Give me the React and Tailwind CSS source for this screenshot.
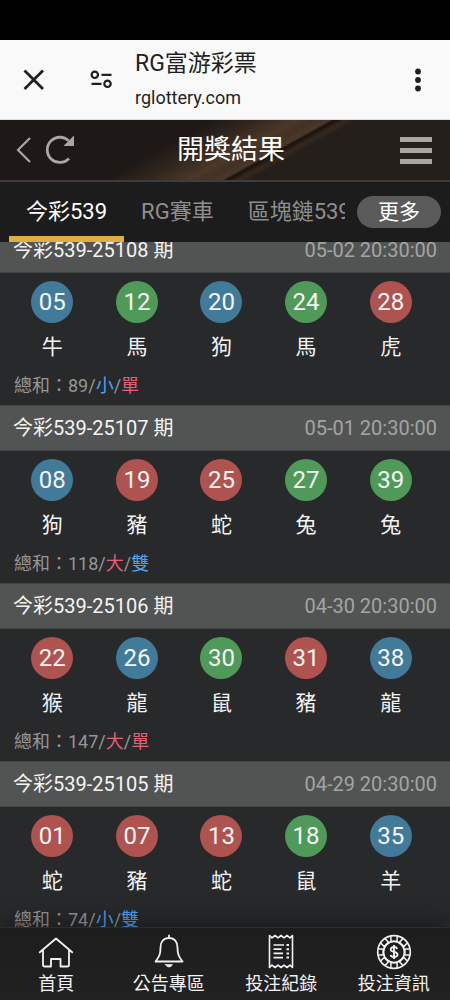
const draws = [
  { id: "25108", date: "05-02 20:30:00", balls: [["05", "b", "牛"], ["12", "g", "馬"], ["20", "b", "狗"], ["24", "g", "馬"], ["28", "r", "虎"]], sum: "89", size: "小", parity: "單" },
  { id: "25107", date: "05-01 20:30:00", balls: [["08", "b", "狗"], ["19", "r", "豬"], ["25", "r", "蛇"], ["27", "g", "兔"], ["39", "g", "兔"]], sum: "118", size: "大", parity: "雙" },
  { id: "25106", date: "04-30 20:30:00", balls: [["22", "r", "猴"], ["26", "b", "龍"], ["30", "g", "鼠"], ["31", "r", "豬"], ["38", "b", "龍"]], sum: "147", size: "大", parity: "單" },
  { id: "25105", date: "04-29 20:30:00", balls: [["01", "r", "蛇"], ["07", "r", "豬"], ["13", "r", "蛇"], ["18", "g", "鼠"], ["35", "b", "羊"]], sum: "74", size: "小", parity: "雙" },
];

const ballColor = { b: "bg-[#427a99]", g: "bg-[#4f9a59]", r: "bg-[#ae5350]" };
const wordColor = { 小: "text-[#4da3ee]", 雙: "text-[#4da3ee]", 大: "text-[#e2607a]", 單: "text-[#e2607a]" };

function BrowserBar() {
  return (
    <div className="flex h-20 shrink-0 items-center border-b border-[#dedede] bg-[#f9f9f9] px-5 text-[#1f1f1f]">
      <button type="button" aria-label="關閉" className="flex size-7 items-center justify-center">
        <svg viewBox="0 0 28 28" className="size-7" fill="none" stroke="currentColor" strokeWidth="2.800">
          <path d="M4.500 4.500 23 23M23 4.500 4.500 23" />
        </svg>
      </button>
      <button type="button" aria-label="網站設定" className="ml-10 flex size-7 items-center justify-center">
        <svg viewBox="0 0 28 28" className="size-7" fill="none" stroke="currentColor" strokeWidth="2.200">
          <circle cx="6.800" cy="8.800" r="3.200" />
          <path d="M13.500 8.800H23.500M3.500 17.800H13.500" />
          <circle cx="19.500" cy="17.800" r="3.200" />
        </svg>
      </button>
      <div className="ml-[19px] flex-1">
        <p className="text-[23px] leading-8">RG富游彩票</p>
        <p className="pt-1 text-lg leading-7">rglottery.com</p>
      </div>
      <button type="button" aria-label="選單" className="flex h-8 w-6 items-center justify-center">
        <svg viewBox="0 0 24 32" className="h-8 w-6" fill="currentColor">
          <circle cx="12" cy="7.500" r="2.900" />
          <circle cx="12" cy="16" r="2.900" />
          <circle cx="12" cy="24.500" r="2.900" />
        </svg>
      </button>
    </div>
  );
}

function PageHeader() {
  return (
    <header className="grid h-[62px] shrink-0 grid-cols-[1fr_auto_1fr] items-center border-b-2 border-[#3d3d3d] bg-[#251f1b] bg-[linear-gradient(151deg,#1e1916_0%,#1e1916_38%,#33271d_46%,#4a3828_53%,#423124_56%,#4a3828_59%,#17120f_60%,#35281e_62%,#251f1b_64%,#251f1b_100%)] pr-[18px] pl-4 text-[#aaa6a3]">
      <div className="flex items-center gap-3">
        <button type="button" aria-label="返回">
          <svg viewBox="0 0 16 28" className="h-7 w-4" fill="none" stroke="currentColor" strokeWidth="2.200">
            <path d="M14 2 2 14 14 26" />
          </svg>
        </button>
        <button type="button" aria-label="重新整理">
          <svg viewBox="0 0 32 32" className="size-8" fill="none" stroke="currentColor" strokeWidth="2.800">
            <path d="M24.600 6.800A12.600 12.600 0 1 0 25 24.500" />
            <path d="M30 1.500v10.500H19.500z" fill="currentColor" stroke="none" />
          </svg>
        </button>
      </div>
      <h1 className="pl-3.5 text-[27px] leading-8 text-white">開獎結果</h1>
      <button type="button" aria-label="主選單" className="flex flex-col gap-1.5 justify-self-end">
        <span className="h-[5px] w-8 bg-[#aaa6a3]" />
        <span className="h-[5px] w-8 bg-[#aaa6a3]" />
        <span className="h-[5px] w-8 bg-[#aaa6a3]" />
      </button>
    </header>
  );
}

function Tabs() {
  return (
    <nav className="flex h-[60px] shrink-0 items-center bg-[#1c1c1c] px-[9px] text-[22px]">
      <div className="flex h-full min-w-0 flex-1 overflow-hidden whitespace-nowrap text-[#8f8f8f]">
        <button type="button" className="shrink-0 border-b-[6px] border-[#e0ad40] px-[17px] pt-1 text-white">今彩539</button>
        <button type="button" className="shrink-0 border-b-[6px] border-transparent px-[17px] pt-1">RG賽車</button>
        <button type="button" className="shrink-0 border-b-[6px] border-transparent px-[17px] pt-1">區塊鏈539</button>
      </div>
      <button type="button" className="ml-3 h-8 w-[84px] rounded-full bg-[#5a5a5a] text-[21px] leading-8 text-white">更多</button>
    </nav>
  );
}

function Draw({ draw }) {
  return (
    <article>
      <div className="flex h-[46px] items-center justify-between border-y border-[#434544] bg-[#525453] px-[13px] text-xl">
        <h2 className="text-[#f4f4f4]">今彩539-{draw.id} 期</h2>
        <time className="text-[#a3a4a4]">{draw.date}</time>
      </div>
      <div className="h-[132px] pt-2">
        <ul className="grid grid-cols-5 pr-[17px] pl-2.5">
          {draw.balls.map(([number, color, animal]) => (
            <li key={number} className="flex flex-col items-center text-[#f4f4f4]">
              <span className={`flex size-[42px] items-center justify-center rounded-full text-2xl ${ballColor[color]}`}>{number}</span>
              <span className="pt-2 text-[21px] leading-8">{animal}</span>
            </li>
          ))}
        </ul>
        <p className="px-3.5 pt-[9px] text-lg leading-7 text-[#969696]">
          總和：{draw.sum}/<span className={wordColor[draw.size]}>{draw.size}</span>/<span className={wordColor[draw.parity]}>{draw.parity}</span>
        </p>
      </div>
    </article>
  );
}

function HomeIcon() {
  return (
    <svg viewBox="0 0 36 36" className="size-9" fill="none" stroke="currentColor" strokeWidth="1.800" strokeLinejoin="round" strokeLinecap="round">
      <path d="M1.800 18.300 18 4.500l16.200 13.800M5 16V31q0 1.500 1.500 1.500H13V25h9.500V32.500h7q1.500 0 1.500-1.500V16" />
    </svg>
  );
}

function BellIcon() {
  return (
    <svg viewBox="0 0 36 36" className="size-9" fill="none" stroke="currentColor" strokeWidth="1.800" strokeLinejoin="round" strokeLinecap="round">
      <path d="M18 1.500v2.500M18 4c-5.500 0-8.500 4-8.500 9.500 0 6.500-1 9-5 14h27c-4-5-5-7.500-5-14C26.500 8 23.500 4 18 4z" />
      <path d="M14.500 30.500h7c-.5 1.500-2 2.500-3.500 2.500s-3-1-3.500-2.500z" fill="currentColor" strokeWidth="0.600" />
    </svg>
  );
}

function ReceiptIcon() {
  return (
    <svg viewBox="0 0 36 36" className="size-9" fill="none" stroke="currentColor" strokeWidth="1.600" strokeLinejoin="round">
      <path d="M6.500 1.500l2.500 2.300 3-2.300 3 2.300 3-2.300 3 2.300 3-2.300 3 2.300 2.500-2.300v32l-2.500-2.300-3 2.300-3-2.300-3 2.300-3-2.300-3 2.300-3-2.300-2.500 2.300z" />
      <path d="M10.500 11H21M10.500 15.200H18.500M10.500 19.400H20M10.500 23.600H20" strokeWidth="1.700" />
      <path d="M23.500 11H26M23.500 15.200H26M23.500 19.400H26M23.500 23.600H26" strokeWidth="2" />
    </svg>
  );
}

function ChipIcon() {
  return (
    <svg viewBox="0 0 36 36" className="size-9" fill="none" stroke="currentColor" strokeWidth="1.700">
      <circle cx="18" cy="18" r="16.300" />
      <circle cx="18" cy="18" r="10.500" />
      {[0, 45, 90, 135, 180, 225, 270, 315].map((angle) => (
        <path key={angle} d="M14.900 2.200V8M21.100 2.200V8M15.500 7.200h5" strokeWidth="1.500" transform={`rotate(${angle} 18 18)`} />
      ))}
      <path d="M21.300 14.800c-.6-1.300-1.800-1.800-3.300-1.800-2 0-3.300 1-3.300 2.400 0 3.400 6.800 1.700 6.800 5.100 0 1.500-1.500 2.500-3.500 2.500-1.700 0-3-.6-3.500-2M18 11v14" strokeWidth="1.900" />
    </svg>
  );
}

const links = [
  { label: "首頁", Icon: HomeIcon },
  { label: "公告專區", Icon: BellIcon },
  { label: "投注紀錄", Icon: ReceiptIcon },
  { label: "投注資訊", Icon: ChipIcon },
];

export default function App() {
  return (
    <div className="flex h-dvh flex-col overflow-hidden bg-[#28292b] font-['Roboto','Noto_Sans_CJK_TC',sans-serif]">
      <div className="h-10 shrink-0 bg-black" />
      <BrowserBar />
      <PageHeader />
      <Tabs />
      <main className="min-h-0 flex-1 overflow-hidden">
        <div className="-mt-[15px]">
          {draws.map((draw) => (
            <Draw key={draw.id} draw={draw} />
          ))}
        </div>
      </main>
      <footer className="z-10 grid h-[73px] shrink-0 grid-cols-4 border-t border-[#2d2d2d] bg-linear-to-b from-[#1d1d1d] to-[#212121] shadow-[0_-6px_24px_rgba(0,0,0,0.35)]">
        {links.map(({ label, Icon }) => (
          <a key={label} href="#" className="flex flex-col items-center gap-0.5 pt-1.5 text-lg leading-6 text-[#f2f2f2]">
            <Icon />
            <span>{label}</span>
          </a>
        ))}
      </footer>
    </div>
  );
}
